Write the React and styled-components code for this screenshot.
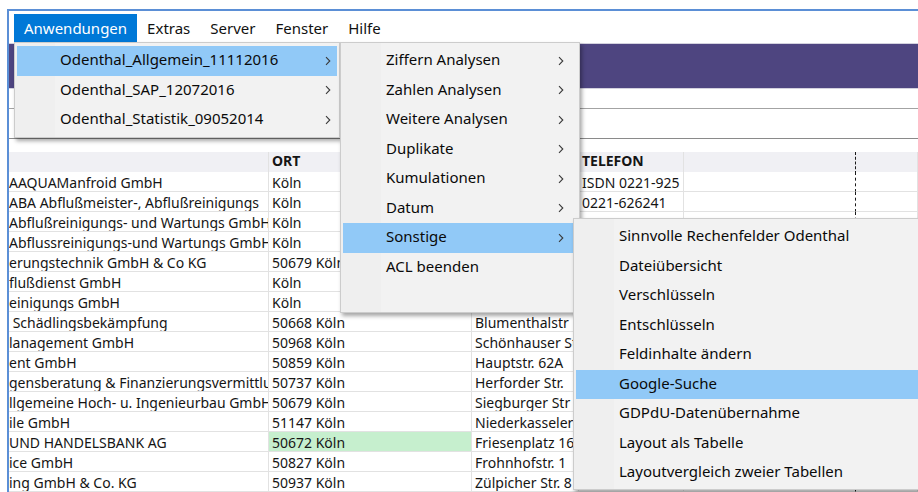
import React from 'react';
import styled, { createGlobalStyle } from 'styled-components';

const GlobalStyle = createGlobalStyle`
  html, body {
    margin: 0;
    padding: 0;
    background: #ffffff;
  }
  body {
    font-family: 'Noto Sans', 'Open Sans', Arial, sans-serif;
    color: #111;
    overflow: hidden;
  }
`;

const Screen = styled.div`
  position: relative;
  width: 918px;
  height: 492px;
  overflow: hidden;
  background: #fff;
`;

const Window = styled.div`
  margin: 9px 0 0 7px;
  height: 483px;
  border-top: 2px solid #5b8fd6;
  border-left: 2px solid #5b8fd6;
  box-sizing: border-box;
  display: flex;
  flex-direction: column;
`;

const MenuBar = styled.div`
  display: flex;
  padding: 3px 0 0 5px;
  height: 28px;
`;

const MenuBarItem = styled.div`
  padding: 0 10px;
  height: 28px;
  line-height: 28px;
  font-size: 15px;
  color: ${(p) => (p.$active ? '#fff' : '#111')};
  background: ${(p) => (p.$active ? '#0078d7' : 'transparent')};
`;

const Banner = styled.div`
  margin-top: 1px;
  height: 44px;
  flex: none;
  background: #4e4580;
  border-top: 1px solid #d3d1de;
  border-bottom: 1px solid #d3d1de;
`;

// empty tool strips between the banner and the grid
const Strip = styled.div`
  height: ${(p) => p.$h}px;
  flex: none;
  border-bottom: 1px solid ${(p) => p.$line || 'transparent'};
`;

const Grid = styled.div`
  display: grid;
  grid-template-columns: 260px 203px 107px 105px 172px 1fr;
  grid-auto-rows: 20px;
  font-size: 14px;
`;

const Cell = styled.div`
  box-sizing: border-box;
  height: ${(p) => (p.$head ? 22 : 20)}px;
  line-height: ${(p) => (p.$head ? 18 : 22)}px;
  padding-left: ${(p) => (p.$flush ? 0 : 3)}px;
  white-space: nowrap;
  overflow: hidden;
  color: #151515;
  font-weight: ${(p) => (p.$head ? 700 : 400)};
  background: ${(p) => (p.$head ? '#f0f0f4' : p.$green ? '#c6efce' : '#fff')};
  border-bottom: 1px solid #e2e2e2;
  border-right: 1px ${(p) => (p.$dashed ? 'dashed #1a1a1a' : 'solid #e2e2e2')};
`;

const Menu = styled.div`
  position: absolute;
  left: ${(p) => p.$x}px;
  top: ${(p) => p.$y}px;
  width: ${(p) => p.$w}px;
  height: ${(p) => p.$h}px;
  box-sizing: border-box;
  padding: 3px 2px 2px;
  background: linear-gradient(to right, #efefef 40px, #f2f2f2 40px);
  border: 1px solid #cccccc;
  box-shadow: 2px 3px 4px rgba(0, 0, 0, 0.35);
  z-index: ${(p) => p.$z};
`;

const MenuItem = styled.div`
  display: flex;
  align-items: center;
  justify-content: space-between;
  box-sizing: border-box;
  height: 29.5px;
  padding: 0 ${(p) => p.$arrowPad || 10}px 3px 43px;
  font-size: 15px;
  color: #0a0a0a;
  white-space: nowrap;
  background: ${(p) => (p.$hot ? '#91c9f7' : 'transparent')};

  svg {
    margin-top: 3px;
  }
`;

const Chevron = () => (
  <svg width="6" height="10" viewBox="0 0 6 10">
    <path d="M1 1.2 L4.8 5 L1 8.8" fill="none" stroke="#3a3a3a" strokeWidth="1.1" />
  </svg>
);

const rows = [
  { name: 'AAQUAManfroid GmbH', ort: 'Köln', tel: 'ISDN 0221-925' },
  { name: 'ABA Abflußmeister-, Abflußreinigungs', ort: 'Köln', tel: '0221-626241' },
  { name: 'Abflußreinigungs- und Wartungs GmbH', ort: 'Köln' },
  { name: 'Abflussreinigungs-und Wartungs GmbH', ort: 'Köln' },
  { name: 'erungstechnik GmbH & Co KG', ort: '50679 Köln' },
  { name: 'flußdienst GmbH', ort: 'Köln' },
  { name: 'einigungs GmbH', ort: 'Köln' },
  { name: '\u00a0Schädlingsbekämpfung', ort: '50668 Köln', street: 'Blumenthalstr' },
  { name: 'lanagement GmbH', ort: '50968 Köln', street: 'Schönhauser Str.' },
  { name: 'ent GmbH', ort: '50859 Köln', street: 'Hauptstr. 62A' },
  { name: 'gensberatung & Finanzierungsvermittlung', ort: '50737 Köln', street: 'Herforder Str.' },
  { name: 'llgemeine Hoch- u. Ingenieurbau GmbH', ort: '50679 Köln', street: 'Siegburger Str' },
  { name: 'ile GmbH', ort: '51147 Köln', street: 'Niederkasseler' },
  { name: 'UND HANDELSBANK AG', ort: '50672 Köln', street: 'Friesenplatz 16', green: true },
  { name: 'ice GmbH', ort: '50827 Köln', street: 'Frohnhofstr. 1' },
  { name: 'ing GmbH & Co. KG', ort: '50937 Köln', street: 'Zülpicher Str. 8' },
];

const appMenu = ['Odenthal_Allgemein_11112016', 'Odenthal_SAP_12072016', 'Odenthal_Statistik_09052014'];

const analysisMenu = [
  { label: 'Ziffern Analysen', sub: true },
  { label: 'Zahlen Analysen', sub: true },
  { label: 'Weitere Analysen', sub: true },
  { label: 'Duplikate', sub: true },
  { label: 'Kumulationen', sub: true },
  { label: 'Datum', sub: true },
  { label: 'Sonstige', sub: true },
  { label: 'ACL beenden' },
];

const otherMenu = [
  'Sinnvolle Rechenfelder Odenthal',
  'Dateiübersicht',
  'Verschlüsseln',
  'Entschlüsseln',
  'Feldinhalte ändern',
  'Google-Suche',
  'GDPdU-Datenübernahme',
  'Layout als Tabelle',
  'Layoutvergleich zweier Tabellen',
];

export default function App() {
  return (
    <Screen>
      <GlobalStyle />
      <Window>
        <MenuBar>
          <MenuBarItem $active>Anwendungen</MenuBarItem>
          <MenuBarItem>Extras</MenuBarItem>
          <MenuBarItem>Server</MenuBarItem>
          <MenuBarItem>Fenster</MenuBarItem>
          <MenuBarItem>Hilfe</MenuBarItem>
        </MenuBar>
        <Banner />
        <Strip $h={19} $line="#a3a3a3" />
        <Strip $h={29} $line="#8a8a8a" />
        <Strip $h={12} />
        <Grid>
          <Cell $head $flush />
          <Cell $head>ORT</Cell>
          <Cell $head />
          <Cell $head>TELEFON</Cell>
          <Cell $head $dashed />
          <Cell $head />
          {rows.map((r, i) => (
            <React.Fragment key={i}>
              <Cell $flush>{r.name}</Cell>
              <Cell $green={r.green}>{r.ort}</Cell>
              <Cell>{r.street}</Cell>
              <Cell>{r.tel}</Cell>
              <Cell $dashed />
              <Cell />
            </React.Fragment>
          ))}
        </Grid>
      </Window>

      <Menu $x={14} $y={42} $w={326} $h={96} $z={1}>
        {appMenu.map((label, i) => (
          <MenuItem key={label} $hot={i === 0} $arrowPad={6}>
            {label}
            <Chevron />
          </MenuItem>
        ))}
      </Menu>

      <Menu $x={340} $y={42} $w={240} $h={271} $z={2}>
        {analysisMenu.map((it) => (
          <MenuItem key={it.label} $hot={it.label === 'Sonstige'} $arrowPad={13}>
            {it.label}
            {it.sub && <Chevron />}
          </MenuItem>
        ))}
      </Menu>

      <Menu $x={573} $y={218} $w={360} $h={272} $z={3}>
        {otherMenu.map((label) => (
          <MenuItem key={label} $hot={label === 'Google-Suche'}>
            {label}
          </MenuItem>
        ))}
      </Menu>
    </Screen>
  );
}
